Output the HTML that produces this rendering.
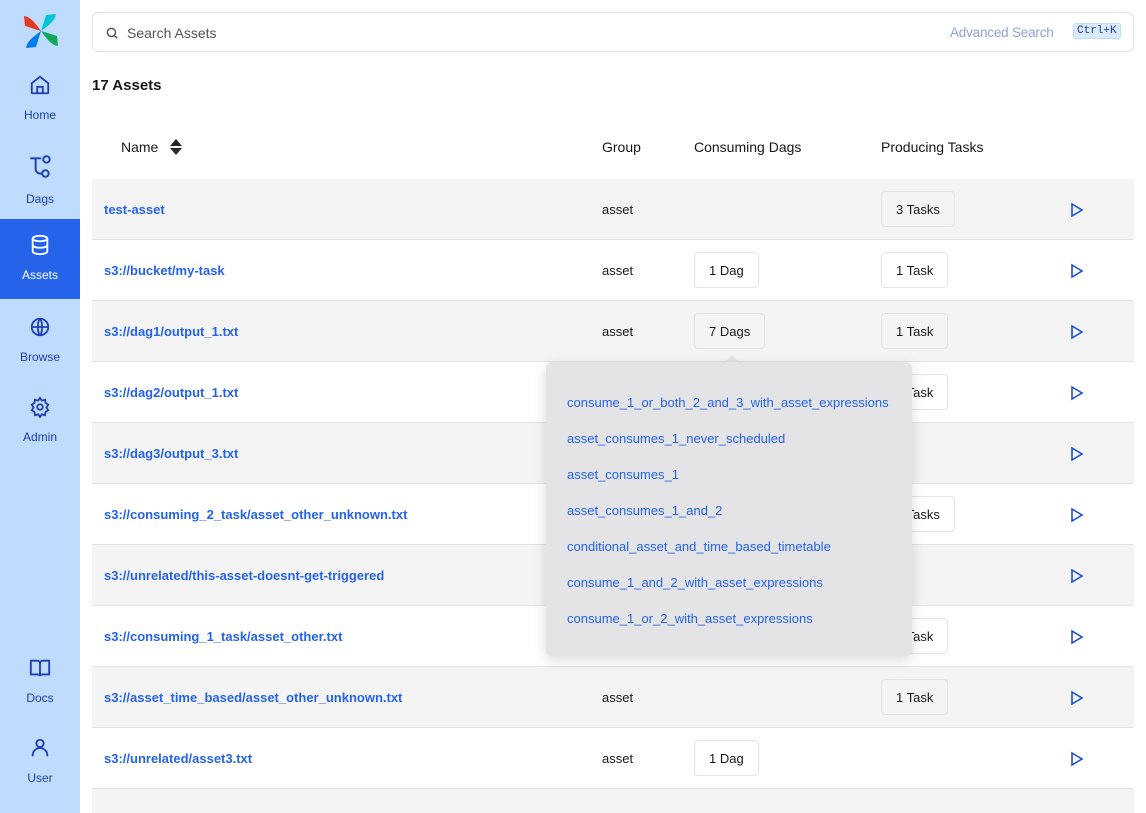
<!DOCTYPE html>
<html><head><meta charset="utf-8"><style>
*{box-sizing:border-box;margin:0;padding:0}
html,body{width:1146px;height:813px;overflow:hidden}
body{font-family:"Liberation Sans",sans-serif;background:#fff;position:relative;color:#18181b}
.side{position:absolute;left:0;top:0;width:80px;height:813px;background:#bfdbfe}
.nav{position:absolute;left:0;width:80px;height:80px;text-align:center;color:#1e40af;font-size:12px;padding-top:2px}
.nav svg{display:block;margin:0 auto 12px}
.nav.act{background:#2563eb;color:#fff}
.search{position:absolute;left:92px;top:12px;width:1042px;height:40px;border:1px solid #e4e4e7;border-radius:6px}
.h{position:absolute;font-size:14px}
.row{position:absolute;left:92px;width:1042px;height:61px;border-bottom:1px solid #e4e4e7}
.row.g{background:#f4f4f5}
.row .n{position:absolute;left:12px;top:23px;font-size:13px;font-weight:bold;color:#2563eb}
.row .gr{position:absolute;left:510px;top:23px;font-size:13px}
.btn{position:absolute;top:12px;height:36px;border:1px solid #e4e4e7;border-radius:4px;font-size:13px;padding:0 14px;line-height:36px;background:inherit}
.row svg{position:absolute;left:978px;top:23px}
.pop{position:absolute;left:546px;top:362px;width:366px;height:294px;background:#e4e4e7;border-radius:6px;box-shadow:0 4px 14px rgba(0,0,0,.15)}
.pop a{display:block;position:absolute;left:21px;font-size:13px;color:#2563eb;text-decoration:none}
</style></head><body>
<div class="side">
<svg style="position:absolute;left:23px;top:13px" width="36" height="36" viewBox="0 0 36 36"><path d="M18 18 C12 10 8 4 1 3 L2 13 Z" fill="#e43921"/><path d="M18 18 C26 12 32 8 33 1 L23 2 Z" fill="#00c7d4"/><path d="M18 18 C24 26 28 32 35 33 L34 23 Z" fill="#11a85a"/><path d="M18 18 C10 24 4 28 3 35 L13 34 Z" fill="#017cee"/></svg>
<div class="nav" style="top:72px"><svg width="22" height="22" viewBox="0 0 24 24" fill="none" stroke="currentColor" stroke-width="2"><path d="M3 10 12 3l9 7v10a1 1 0 0 1-1 1H4a1 1 0 0 1-1-1z"/><path d="M9 21v-7h6v7"/></svg>Home</div>
<div class="nav" style="top:152px"><svg width="26" height="26" viewBox="0 0 24 24" fill="none" stroke="currentColor" stroke-width="1.8"><path d="M3 4h10M8 4v10a4 4 0 0 0 4 4h2"/><circle cx="18" cy="5" r="3"/><circle cx="17" cy="18" r="3"/></svg>Dags</div>
<div class="nav act" style="top:219px;padding-top:15px"><svg width="22" height="22" viewBox="0 0 24 24" fill="none" stroke="currentColor" stroke-width="2"><ellipse cx="12" cy="5" rx="8" ry="3"/><path d="M4 5v14c0 1.7 3.6 3 8 3s8-1.3 8-3V5M4 12c0 1.7 3.6 3 8 3s8-1.3 8-3"/></svg>Assets</div>
<div class="nav" style="top:314px"><svg width="22" height="22" viewBox="0 0 24 24" fill="none" stroke="currentColor" stroke-width="2"><circle cx="12" cy="12" r="9"/><path d="M3 12h18M12 3c3 3 3 15 0 18M12 3c-3 3-3 15 0 18"/></svg>Browse</div>
<div class="nav" style="top:394px"><svg width="22" height="22" viewBox="0 0 24 24" fill="none" stroke="currentColor" stroke-width="2"><circle cx="12" cy="12" r="3"/><path d="M12 2l2 3 3.5-1 .5 3.5 3 2-2 3 2 3-3 2-.5 3.5-3.5-1-2 3-2-3-3.5 1-.5-3.5-3-2 2-3-2-3 3-2 .5-3.5 3.5 1z"/></svg>Admin</div>
<div class="nav" style="top:655px"><svg width="22" height="22" viewBox="0 0 24 24" fill="none" stroke="currentColor" stroke-width="2"><path d="M2 4h7a3 3 0 0 1 3 3v14a2 2 0 0 0-2-2H2zM22 4h-7a3 3 0 0 0-3 3v14a2 2 0 0 1 2-2h8z"/></svg>Docs</div>
<div class="nav" style="top:735px"><svg width="22" height="22" viewBox="0 0 24 24" fill="none" stroke="currentColor" stroke-width="2"><circle cx="12" cy="7" r="4"/><path d="M4 21v-1a7 7 0 0 1 16 0v1"/></svg>User</div>
</div>
<div class="search">
<svg style="position:absolute;left:12px;top:13px" width="14" height="14" viewBox="0 0 24 24" fill="none" stroke="#52525b" stroke-width="2.5"><circle cx="11" cy="11" r="7"/><path d="M16 16l5 5"/></svg>
<span style="position:absolute;left:34px;top:12px;font-size:14px;color:#52525b">Search Assets</span>
<span style="position:absolute;left:857px;top:12px;font-size:13.5px;color:#8ea3d8;letter-spacing:-0.2px">Advanced Search</span>
<span style="position:absolute;left:980px;top:10px;font-size:11px;font-family:'Liberation Mono',monospace;background:#dbeafe;border:1px solid #bfdbfe;border-radius:3px;padding:1px 3px;color:#1e3a8a">Ctrl+K</span>
</div>
<div class="h" style="left:92px;top:77px;font-size:15px;font-weight:bold">17 Assets</div>
<div class="h" style="left:121px;top:139px">Name</div>
<svg style="position:absolute;left:170px;top:139px" width="12" height="16" viewBox="0 0 12 16"><path d="M6 0l6 7H0zM6 16l6-7H0z" fill="#27272a"/></svg>
<div class="h" style="left:602px;top:139px">Group</div>
<div class="h" style="left:694px;top:139px">Consuming Dags</div>
<div class="h" style="left:881px;top:139px">Producing Tasks</div>

<div class="row g" style="top:179px"><span class="n">test-asset</span><span class="gr">asset</span><span class="btn" style="left:789px">3 Tasks</span><svg width="14" height="16" viewBox="0 0 14 16" fill="none" stroke="#1d4ed8" stroke-width="1.6"><path d="M2 2l10 6-10 6z"/></svg></div>
<div class="row" style="top:240px"><span class="n">s3://bucket/my-task</span><span class="gr">asset</span><span class="btn" style="left:602px">1 Dag</span><span class="btn" style="left:789px">1 Task</span><svg width="14" height="16" viewBox="0 0 14 16" fill="none" stroke="#1d4ed8" stroke-width="1.6"><path d="M2 2l10 6-10 6z"/></svg></div>
<div class="row g" style="top:301px"><span class="n">s3://dag1/output_1.txt</span><span class="gr">asset</span><span class="btn" style="left:602px">7 Dags</span><span class="btn" style="left:789px">1 Task</span><svg width="14" height="16" viewBox="0 0 14 16" fill="none" stroke="#1d4ed8" stroke-width="1.6"><path d="M2 2l10 6-10 6z"/></svg></div>
<div class="row" style="top:362px"><span class="n">s3://dag2/output_1.txt</span><span class="btn" style="left:789px">1 Task</span><svg width="14" height="16" viewBox="0 0 14 16" fill="none" stroke="#1d4ed8" stroke-width="1.6"><path d="M2 2l10 6-10 6z"/></svg></div>
<div class="row g" style="top:423px"><span class="n">s3://dag3/output_3.txt</span><svg width="14" height="16" viewBox="0 0 14 16" fill="none" stroke="#1d4ed8" stroke-width="1.6"><path d="M2 2l10 6-10 6z"/></svg></div>
<div class="row" style="top:484px"><span class="n">s3://consuming_2_task/asset_other_unknown.txt</span><span class="btn" style="left:789px">2 Tasks</span><svg width="14" height="16" viewBox="0 0 14 16" fill="none" stroke="#1d4ed8" stroke-width="1.6"><path d="M2 2l10 6-10 6z"/></svg></div>
<div class="row g" style="top:545px"><span class="n">s3://unrelated/this-asset-doesnt-get-triggered</span><svg width="14" height="16" viewBox="0 0 14 16" fill="none" stroke="#1d4ed8" stroke-width="1.6"><path d="M2 2l10 6-10 6z"/></svg></div>
<div class="row" style="top:606px"><span class="n">s3://consuming_1_task/asset_other.txt</span><span class="btn" style="left:789px">1 Task</span><svg width="14" height="16" viewBox="0 0 14 16" fill="none" stroke="#1d4ed8" stroke-width="1.6"><path d="M2 2l10 6-10 6z"/></svg></div>
<div class="row g" style="top:667px"><span class="n">s3://asset_time_based/asset_other_unknown.txt</span><span class="gr">asset</span><span class="btn" style="left:789px">1 Task</span><svg width="14" height="16" viewBox="0 0 14 16" fill="none" stroke="#1d4ed8" stroke-width="1.6"><path d="M2 2l10 6-10 6z"/></svg></div>
<div class="row" style="top:728px"><span class="n">s3://unrelated/asset3.txt</span><span class="gr">asset</span><span class="btn" style="left:602px">1 Dag</span><svg width="14" height="16" viewBox="0 0 14 16" fill="none" stroke="#1d4ed8" stroke-width="1.6"><path d="M2 2l10 6-10 6z"/></svg></div>
<div class="row g" style="top:789px;height:24px;border:none"></div>

<div style="position:absolute;left:724px;top:355px;width:0;height:0;border-left:8px solid transparent;border-right:8px solid transparent;border-bottom:8px solid #e4e4e7"></div>
<div class="pop">
<a style="top:33px">consume_1_or_both_2_and_3_with_asset_expressions</a>
<a style="top:69px">asset_consumes_1_never_scheduled</a>
<a style="top:105px">asset_consumes_1</a>
<a style="top:141px">asset_consumes_1_and_2</a>
<a style="top:177px">conditional_asset_and_time_based_timetable</a>
<a style="top:213px">consume_1_and_2_with_asset_expressions</a>
<a style="top:249px">consume_1_or_2_with_asset_expressions</a>
</div>
</body></html>
